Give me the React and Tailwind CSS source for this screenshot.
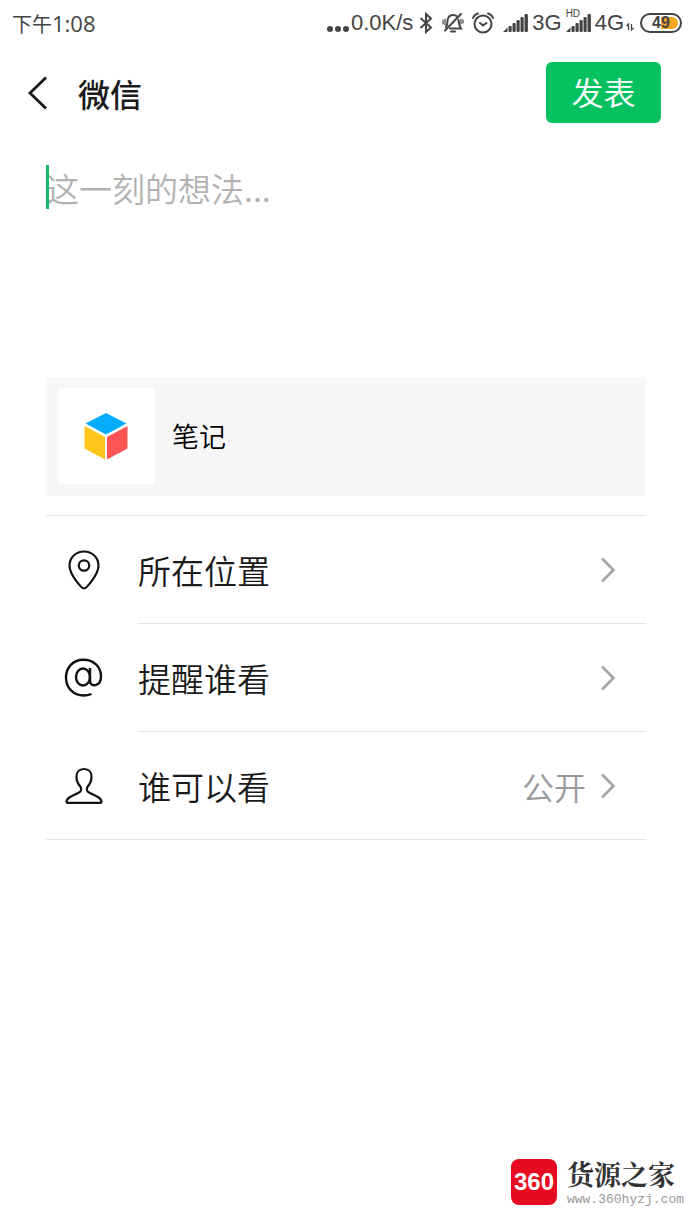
import React from "react";

function SignalBars() {
    return (
        <svg className="w-[25px] h-[18px]" viewBox="0 0 25 18" fill="#444">
            <path d="M0 18 L4.500 13.500 V18 Z" />
            <rect x="5.500" y="12" width="3.200" height="6" rx="1" />
            <rect x="9.500" y="9" width="3.200" height="9" rx="1" />
            <rect x="13.500" y="6" width="3.200" height="12" rx="1" />
            <rect x="17.500" y="3" width="3.200" height="15" rx="1" />
            <rect x="21.500" y="0" width="3.400" height="18" rx="1" />
        </svg>
    );
}

function BluetoothIcon() {
    return (
        <svg
            className="w-[14px] h-[22px] ml-[6px]"
            viewBox="0 0 14 22"
            fill="none"
            stroke="#444"
            strokeWidth="2"
        >
            <path d="M1.500 6 L12 15.500 L7 20 V2 L12 6.500 L1.500 16" />
        </svg>
    );
}

function MutedBellIcon() {
    return (
        <svg
            className="w-[22px] h-[22px] ml-[9px]"
            viewBox="0 0 22 22"
            fill="none"
            stroke="#444"
            strokeWidth="2"
            strokeLinecap="round"
        >
            <path d="M4 15 C6 13 5 9 6 6.500 C7 4 9 3 11 3 C12.500 3 14 3.500 15 4.500" />
            <path d="M16.500 8 C17 11 17 14 19 16.500 H8" />
            <path d="M3 18.500 L19 2" />
            <path d="M9 19.500 H13" />
            <path d="M1 8 V12 M3 7 V13 M19 7 V12 M21 8 V11" strokeWidth="1.200" />
        </svg>
    );
}

function AlarmIcon() {
    return (
        <svg
            className="w-[22px] h-[22px] ml-2"
            viewBox="0 0 22 22"
            fill="none"
            stroke="#444"
            strokeWidth="2"
            strokeLinecap="round"
        >
            <circle cx="11" cy="12" r="8.500" />
            <path d="M1 6 C2 3.500 4 2 6 1.500 M21 6 C20 3.500 18 2 16 1.500" />
            <path d="M8 11 L11 13.500 L14.500 11" />
        </svg>
    );
}

function StatusBar() {
    return (
        <div className="flex items-center justify-between h-[46px] pl-3 pr-[10px] text-[#444] text-[22px] leading-6 font-normal">
            <span>
                <span className="text-[20px]">下午</span>
                <span className="font-['Open_Sans']">1:08</span>
            </span>
            <div className="flex items-center font-['Liberation_Sans']">
                <svg className="w-6 h-[22px]" viewBox="0 0 24 22" fill="#444">
                    <circle cx="3" cy="17" r="3" />
                    <circle cx="11" cy="17" r="3" />
                    <circle cx="19" cy="17" r="3" />
                </svg>
                <span>0.0K/s</span>
                <BluetoothIcon />
                <MutedBellIcon />
                <AlarmIcon />
                <span className="flex items-center ml-[9px]">
                    <SignalBars />
                    <span className="ml-1">3G</span>
                </span>
                <span className="relative flex items-center ml-1">
                    <SignalBars />
                    <span className="absolute left-0 -top-1 text-[10px] leading-[14px]">
                        HD
                    </span>
                    <span className="ml-1">4G</span>
                </span>
                <svg
                    className="w-2 h-[22px] ml-[2px]"
                    viewBox="0 0 8 22"
                    fill="none"
                    stroke="#444"
                    strokeWidth="1.300"
                >
                    <path d="M2.500 18 V12 L0.500 14 M5.500 12 V18 L7.500 16" />
                </svg>
                <span className="flex items-center justify-center w-[42px] h-5 ml-[6px] p-[2px] rounded-full border-2 border-[#444]">
                    <span className="flex items-center justify-center w-full h-full rounded-full bg-linear-to-r from-white from-50% to-[#f5a623] to-50% text-[16px] leading-4 font-bold">
                        49
                    </span>
                </span>
            </div>
        </div>
    );
}

function Chevron() {
    return (
        <svg
            className="w-4 h-[26px]"
            viewBox="0 0 16 26"
            fill="none"
            stroke="#a3a3a3"
            strokeWidth="2.500"
        >
            <path d="M2 1.500 L13.500 13 L2 24.500" />
        </svg>
    );
}

function PinIcon() {
    return (
        <svg
            className="w-10 h-10"
            viewBox="0 0 40 40"
            fill="none"
            stroke="#111"
            strokeWidth="2.200"
        >
            <path
                d="M20 38.500 C18 38.500 5.500 25 5.500 15.500 C5.500 7.500 12 1.500 20 1.500 C28 1.500 34.500 7.500 34.500 15.500 C34.500 25 22 38.500 20 38.500 Z"
                strokeLinejoin="round"
            />
            <circle cx="20" cy="15.500" r="5.200" />
        </svg>
    );
}

function AtIcon() {
    return (
        <svg
            className="w-10 h-10"
            viewBox="0 0 40 40"
            fill="none"
            stroke="#111"
            strokeWidth="2.400"
        >
            <ellipse cx="19" cy="19" rx="7" ry="8.500" />
            <path d="M26 10 V23 C26 29.500 37 29 37 18.500 C37 8.500 29.500 1.800 19.500 1.800 C9 1.800 2 9.500 2 19.500 C2 30 9.500 37.500 19.500 37.500 C22.500 37.500 25 37 27.500 36" />
        </svg>
    );
}

function PersonIcon() {
    return (
        <svg
            className="w-10 h-10"
            viewBox="0 0 40 40"
            fill="none"
            stroke="#111"
            strokeWidth="2.200"
            strokeLinejoin="round"
        >
            <path d="M20 3 C15 3 12.500 6.500 12.500 10.500 C12.500 14.500 13.500 17.500 16 20 C18 22.500 17.500 25 15 26.500 L6 31 C3.500 32.500 2.500 33.500 2.500 36 Q2.500 36.800 4 36.800 H36 Q37.500 36.800 37.500 36 C37.500 33.500 36.500 32.500 34 31 L25 26.500 C22.500 25 22 22.500 24 20 C26.500 17.500 27.500 14.500 27.500 10.500 C27.500 6.500 25 3 20 3 Z" />
        </svg>
    );
}

const options = [
    { label: "所在位置", icon: PinIcon, value: "" },
    { label: "提醒谁看", icon: AtIcon, value: "" },
    { label: "谁可以看", icon: PersonIcon, value: "公开" },
];

function OptionRow({ label, icon: Icon, value }) {
    return (
        <li className="group">
            <button
                type="button"
                className="flex items-center w-full pl-[18px] text-left"
            >
                <Icon />
                <span className="flex flex-1 items-center h-[108px] ml-[34px] pr-[30px] border-b border-[#e5e5e5] group-last:h-[107px] group-last:border-b-0">
                    <span className="flex-1 text-[33px] leading-10 text-[#1a1a1a]">
                        {label}
                    </span>
                    <span className="mr-[14px] text-[32px] leading-10 text-[#999]">
                        {value}
                    </span>
                    <Chevron />
                </span>
            </button>
        </li>
    );
}

export default function App() {
    return (
        <div className="flex flex-col min-h-screen bg-white font-['Noto_Sans_CJK_SC',sans-serif] font-[350]">
            <StatusBar />

            {/* Header */}
            <header className="flex items-center h-[93px] pl-[26px] pr-[31px]">
                <button type="button" aria-label="返回">
                    <svg
                        className="w-[22px] h-[34px]"
                        viewBox="0 0 22 34"
                        fill="none"
                        stroke="#1a1a1a"
                        strokeWidth="2.800"
                    >
                        <path d="M20 1.500 L4 17 L20 32.500" />
                    </svg>
                </button>
                <h1 className="flex-1 ml-[30px] text-[32px] leading-9 font-medium text-[#1a1a1a]">
                    微信
                </h1>
                <button
                    type="button"
                    className="w-[115px] h-[61px] pb-1 rounded-md bg-[#07c160] text-[32px] leading-9 text-white"
                >
                    发表
                </button>
            </header>

            <main className="px-[46px] pt-[26px]">
                <div className="relative">
                    <textarea
                        aria-label="这一刻的想法"
                        placeholder="这一刻的想法..."
                        className="block w-full h-[212px] resize-none outline-none text-[33px] leading-[46px] placeholder:text-[#b2b2b2] caret-[#07c160]"
                    />
                    {/* Text cursor */}
                    <span className="absolute left-0 top-0 w-[3px] h-11 bg-[#1cb76b]" />
                </div>

                {/* Shared link */}
                <div className="flex items-center gap-[18px] px-3 pt-[11px] pb-3 bg-[#f7f7f7]">
                    <div className="flex items-center justify-center size-24 bg-white">
                        <svg className="w-11 h-12" viewBox="0 0 44 48">
                            <path
                                d="M22 1 L42.500 11.500 L22 22.500 L1.500 11.500 Z"
                                fill="#04adff"
                            />
                            <path d="M0.500 14 L21 25 V47.500 L0.500 36.500 Z" fill="#ffc61c" />
                            <path d="M43.500 14 L23 25 V47.500 L43.500 36.500 Z" fill="#fb5454" />
                        </svg>
                    </div>
                    <span className="text-[27px] leading-10 text-black">笔记</span>
                </div>

                <ul className="mt-[19px] border-y border-[#e5e5e5]">
                    {options.map((option) => (
                        <OptionRow key={option.label} {...option} />
                    ))}
                </ul>
            </main>

            {/* Site mark */}
            <footer className="flex items-center justify-end gap-[10px] mt-auto pr-2 pb-[22px]">
                <span className="flex items-center justify-center size-[46px] rounded-lg bg-[#e60b20] font-['Liberation_Sans'] text-[24px] leading-8 font-bold text-white">
                    360
                </span>
                <div>
                    <p className="font-['Noto_Serif_CJK_SC','Noto_Sans_CJK_SC',serif] text-[27px] leading-9 font-bold text-[#333]">
                        货源之家
                    </p>
                    <p className="font-['Liberation_Mono'] text-[13px] leading-4 text-[#999]">
                        www.360hyzj.com
                    </p>
                </div>
            </footer>
        </div>
    );
}
